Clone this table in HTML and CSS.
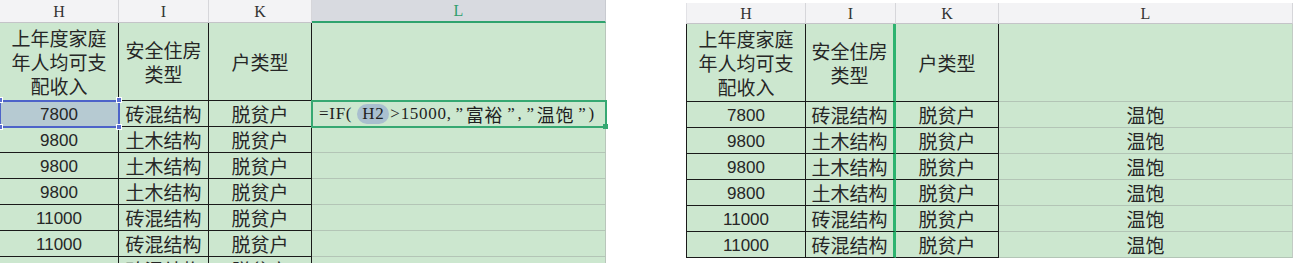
FILE: index.html
```html
<!DOCTYPE html>
<html lang="zh">
<head>
<meta charset="utf-8">
<link rel="stylesheet" href="styles.css">
</head>
<body>
<div class="page">
  <div class="sheet sheet-left">
    <div class="hdr">H</div>
    <div class="hdr">I</div>
    <div class="hdr">K</div>
    <div class="hdr hdr-sel">L</div>

    <div class="c cjk title">上年度家庭<br>年人均可支<br>配收入</div>
    <div class="c cjk">安全住房<br>类型</div>
    <div class="c cjk">户类型</div>
    <div class="c l"></div>

    <div class="c num ref">7800<span class="hd tl"></span><span class="hd tr"></span><span class="hd bl"></span><span class="hd br"></span></div>
    <div class="c cjk">砖混结构</div>
    <div class="c cjk">脱贫户</div>
    <div class="c l editing"><span class="formula">=IF(<span class="refpill">H2</span>&gt;15000,<span class="q">”</span><span class="fc">富裕</span><span class="q">”</span>,<span class="q">”</span><span class="fc">温饱</span><span class="q">”</span>)</span><span class="fill"></span></div>

    <div class="c num">9800</div><div class="c cjk">土木结构</div><div class="c cjk">脱贫户</div><div class="c l"></div>
    <div class="c num">9800</div><div class="c cjk">土木结构</div><div class="c cjk">脱贫户</div><div class="c l"></div>
    <div class="c num">9800</div><div class="c cjk">土木结构</div><div class="c cjk">脱贫户</div><div class="c l"></div>
    <div class="c num">11000</div><div class="c cjk">砖混结构</div><div class="c cjk">脱贫户</div><div class="c l"></div>
    <div class="c num">11000</div><div class="c cjk">砖混结构</div><div class="c cjk">脱贫户</div><div class="c l"></div>
    <div class="c num">11000</div><div class="c cjk">砖混结构</div><div class="c cjk">脱贫户</div><div class="c l"></div>
  </div>

  <div class="sheet sheet-right">
    <div class="hdr">H</div>
    <div class="hdr">I</div>
    <div class="hdr">K</div>
    <div class="hdr">L</div>

    <div class="c first cjk title">上年度家庭<br>年人均可支<br>配收入</div>
    <div class="c cjk mark">安全住房<br>类型</div>
    <div class="c cjk">户类型</div>
    <div class="c l"></div>

    <div class="c first num">7800</div><div class="c cjk mark">砖混结构</div><div class="c cjk">脱贫户</div><div class="c l cjk">温饱</div>
    <div class="c first num">9800</div><div class="c cjk mark">土木结构</div><div class="c cjk">脱贫户</div><div class="c l cjk">温饱</div>
    <div class="c first num">9800</div><div class="c cjk mark">土木结构</div><div class="c cjk">脱贫户</div><div class="c l cjk">温饱</div>
    <div class="c first num">9800</div><div class="c cjk mark">土木结构</div><div class="c cjk">脱贫户</div><div class="c l cjk">温饱</div>
    <div class="c first num">11000</div><div class="c cjk mark">砖混结构</div><div class="c cjk">脱贫户</div><div class="c l cjk">温饱</div>
    <div class="c first num">11000</div><div class="c cjk mark">砖混结构</div><div class="c cjk">脱贫户</div><div class="c l cjk">温饱</div>
  </div>
</div>
</body>
</html>
```

FILE: styles.css
```css
* { box-sizing: border-box; }
html, body { margin: 0; padding: 0; background: #ffffff; }
body { width: 1294px; height: 263px; overflow: hidden; }

.page {
  display: flex;
  align-items: flex-start;
  gap: 80px;
  height: 263px;
  overflow: hidden;
}

.sheet {
  display: grid;
  grid-template-columns: 119px 90px 103px 294px;
  grid-template-rows: 23px 78px repeat(7, 26px);
}

.sheet-right {
  margin-top: 3px;
  grid-template-columns: 120px 90px 103px 294px;
  grid-template-rows: 21px 78px repeat(6, 26px);
}

.hdr {
  background: #f3f3f5;
  border-right: 1px solid #d6d6da;
  border-bottom: 1px solid #c4c4c8;
  font-family: "Liberation Serif", "DejaVu Serif", serif;
  font-size: 16px;
  color: #333333;
  display: flex;
  align-items: center;
  justify-content: center;
  padding-top: 1px;
}
.sheet-right .hdr:first-child { border-left: 1px solid #e2e2e6; }

.hdr-sel {
  background: #d8dae0;
  color: #2f9f6c;
  border-bottom: 2px solid #2fa36e;
  border-right: 1px solid #c8cad0;
}

.c {
  position: relative;
  background: #cce7cf;
  border-right: 1px solid #1a1a1a;
  border-bottom: 1px solid #1a1a1a;
  display: flex;
  align-items: center;
  justify-content: center;
  text-align: center;
  color: #262626;
}
.c.first { border-left: 1px solid #1a1a1a; }
.c.l {
  border-right: 1px solid #b9c6bb;
  border-bottom: 1px solid #b3c5b6;
}
.sheet-right .c.l { border-right: 1px solid #c2cbc4; }

.cjk {
  font-family: "Noto Sans CJK SC", "Noto Sans", sans-serif;
  font-size: 19px;
  line-height: 24px;
}
.title { padding-top: 1px; }

.num {
  font-family: "Liberation Sans", Arial, sans-serif;
  font-size: 17px;
  padding-top: 2px;
}

.mark { border-right: 3px solid #2db36f; }

/* referenced cell H2 */
.ref {
  background: #b6cad2;
  outline: 2px solid #4d63c9;
  outline-offset: -1px;
  z-index: 2;
}
.hd {
  position: absolute;
  width: 6px;
  height: 6px;
  background: #5a6fd0;
  border: 1px solid #ffffff;
}
.hd.tl { left: -3px; top: -4px; }
.hd.tr { right: -4px; top: -4px; }
.hd.bl { left: -3px; bottom: -4px; }
.hd.br { right: -4px; bottom: -4px; }

/* editing cell L2 */
.editing {
  justify-content: flex-start;
  outline: 2px solid #36a872;
  outline-offset: -1px;
  z-index: 2;
  padding-left: 7px;
}
.formula {
  font-family: "Liberation Serif", "Noto Sans CJK SC", serif;
  font-size: 17px;
  color: #1f1f1f;
  white-space: nowrap;
  letter-spacing: 0.7px;
  display: flex;
  align-items: center;
}
.formula .refpill {
  background: #a9bfcf;
  border-radius: 10px;
  padding: 0 5px;
  margin: 0 1px 0 5px;
}
.formula .fc {
  font-family: "Noto Sans CJK SC", sans-serif;
  font-size: 18px;
}
.formula .q { padding: 0 2px 0 4px; }
.editing .fill {
  position: absolute;
  right: -3px;
  bottom: -3px;
  width: 5px;
  height: 5px;
  background: #36a872;
}
```
